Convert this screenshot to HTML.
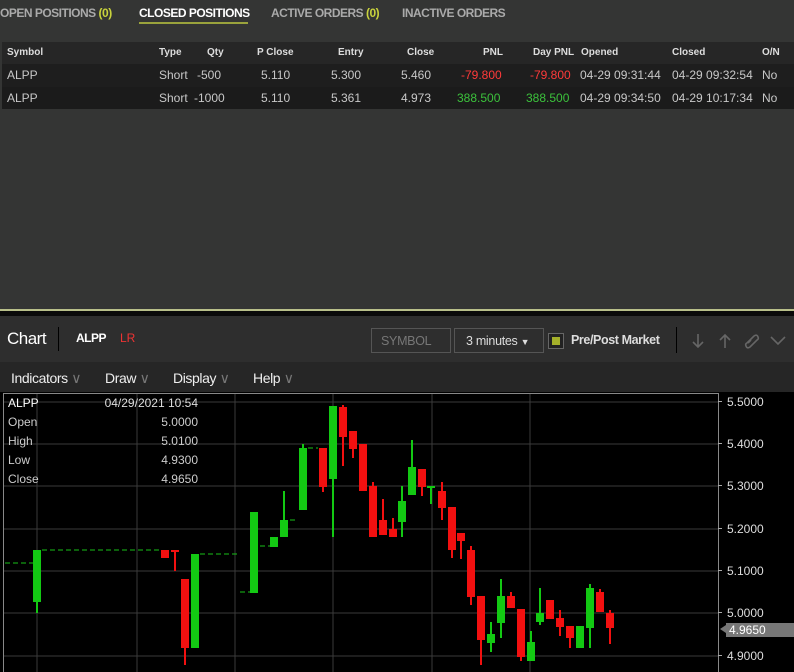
<!DOCTYPE html>
<html><head><meta charset="utf-8"><style>
*{margin:0;padding:0;box-sizing:border-box}
body{width:794px;height:672px;overflow:hidden;background:#343534;font-family:"Liberation Sans",Arial,sans-serif;position:relative;font-size:12px;color:#ccc}
.abs{position:absolute;white-space:nowrap}
.tab{top:6px;font-size:12px;font-weight:bold;color:#aaa;letter-spacing:-0.5px}
.y{color:#c8d23c}
.row{position:absolute;left:2px;width:792px;height:22px}
.c{position:absolute;top:5px;white-space:nowrap}
.h .c{font-size:10px;font-weight:bold;color:#ddd;top:5px}
.d .c{font-size:12px;color:#c8c8c8;top:4px}
.red{color:#ff3a3a!important}.grn{color:#3cc23c!important}
</style></head><body>
<div class="abs tab" style="left:0">OPEN POSITIONS <span class="y">(0)</span></div>
<div class="abs tab" style="left:139px;color:#fff">CLOSED POSITIONS</div>
<div class="abs" style="left:139px;top:22px;width:109px;height:2px;background:#9aa33c"></div>
<div class="abs tab" style="left:271px">ACTIVE ORDERS <span class="y">(0)</span></div>
<div class="abs tab" style="left:402px">INACTIVE ORDERS</div>

<div class="row h" style="top:42px;background:#262626">
<div class="c" style="left:5px">Symbol</div><div class="c" style="left:157px">Type</div><div class="c" style="left:205px">Qty</div>
<div class="c" style="left:255px">P Close</div><div class="c" style="left:336px">Entry</div><div class="c" style="left:405px">Close</div>
<div class="c" style="left:481px">PNL</div><div class="c" style="left:531px">Day PNL</div><div class="c" style="left:579px">Opened</div>
<div class="c" style="left:670px">Closed</div><div class="c" style="left:760px">O/N</div></div>
<div class="row d" style="top:64px;background:#1e1e1e;height:23px">
<div class="c" style="left:5px">ALPP</div><div class="c" style="left:157px">Short</div><div class="c" style="left:195px">-500</div>
<div class="c" style="left:259px">5.110</div><div class="c" style="left:329px">5.300</div><div class="c" style="left:399px">5.460</div>
<div class="c red" style="left:459px">-79.800</div><div class="c red" style="left:528px">-79.800</div><div class="c" style="left:578px">04-29 09:31:44</div>
<div class="c" style="left:670px">04-29 09:32:54</div><div class="c" style="left:760px">No</div></div>
<div class="row d" style="top:87px;background:#1b1b1b">
<div class="c" style="left:5px">ALPP</div><div class="c" style="left:157px">Short</div><div class="c" style="left:192px">-1000</div>
<div class="c" style="left:259px">5.110</div><div class="c" style="left:329px">5.361</div><div class="c" style="left:399px">4.973</div>
<div class="c grn" style="left:455px">388.500</div><div class="c grn" style="left:524px">388.500</div><div class="c" style="left:578px">04-29 09:34:50</div>
<div class="c" style="left:670px">04-29 10:17:34</div><div class="c" style="left:760px">No</div></div>

<div class="abs" style="left:0;top:309px;width:794px;height:2px;background:#b8bf8a"></div>
<div class="abs" style="left:0;top:311px;width:794px;height:5px;background:#0a0a0a"></div>
<div class="abs" style="left:0;top:316px;width:794px;height:46px;background:#2e2e2e"></div>
<div class="abs" style="left:7px;top:329px;font-size:17px;color:#fff;letter-spacing:-0.5px">Chart</div>
<div class="abs" style="left:58px;top:327px;width:1px;height:24px;background:#000"></div>
<div class="abs" style="left:76px;top:331px;font-size:12px;font-weight:bold;color:#fff;letter-spacing:-0.5px">ALPP</div>
<div class="abs" style="left:120px;top:331px;font-size:12px;color:#e33">LR</div>
<div class="abs" style="left:371px;top:328px;width:80px;height:25px;border:1px solid #555;color:#777;font-size:12.5px;padding:5px 0 0 9px;letter-spacing:-0.3px">SYMBOL</div>
<div class="abs" style="left:454px;top:328px;width:90px;height:25px;border:1px solid #555;color:#ddd;font-size:12.5px;padding:5px 0 0 11px;letter-spacing:-0.3px">3 minutes <span style="font-size:9px">▼</span></div>
<div class="abs" style="left:548px;top:333px;width:16px;height:16px;border:1px solid #666;background:#222"><div style="margin:3px;width:8px;height:8px;background:#a4b02a"></div></div>
<div class="abs" style="left:571px;top:333px;font-size:12.5px;font-weight:bold;color:#ddd;letter-spacing:-0.4px">Pre/Post Market</div>
<div class="abs" style="left:676px;top:327px;width:1px;height:26px;background:#000"></div>
<svg class="abs" style="left:688px;top:332px" width="100" height="18">
<g stroke="#666" stroke-width="1.6" fill="none">
<path d="M10 2 V15 M5 10 L10 15 L15 10"/>
<path d="M37 16 V3 M32 8 L37 3 L42 8"/>
<path d="M59 11 L66 4 Q69 2 70 5 Q71 7 69 8 L62 15 Q59 17 58 14 Q57 12 59 11 M63 8 L60 11"/>
<path d="M83 5 L90 12 L97 5"/>
</g></svg>

<div class="abs" style="left:0;top:362px;width:794px;height:30px;background:#262626"></div>
<div class="abs" style="left:11px;top:370px;font-size:14px;color:#eee;letter-spacing:-0.4px">Indicators <span style="color:#777">∨</span></div>
<div class="abs" style="left:105px;top:370px;font-size:14px;color:#eee;letter-spacing:-0.4px">Draw <span style="color:#777">∨</span></div>
<div class="abs" style="left:173px;top:370px;font-size:14px;color:#eee;letter-spacing:-0.4px">Display <span style="color:#777">∨</span></div>
<div class="abs" style="left:253px;top:370px;font-size:14px;color:#eee;letter-spacing:-0.4px">Help <span style="color:#777">∨</span></div>

<svg class="abs" style="left:0;top:392px" width="794" height="280">
<rect x="0" y="0" width="794" height="280" fill="#000"/>
<rect x="3.5" y="1.5" width="715" height="290" fill="none" stroke="#888"/>
<g stroke="#3a3a3a" stroke-width="1">
<line x1="4" y1="10" x2="718" y2="10"/><line x1="4" y1="52" x2="718" y2="52"/><line x1="4" y1="94" x2="718" y2="94"/><line x1="4" y1="137" x2="718" y2="137"/><line x1="4" y1="179" x2="718" y2="179"/><line x1="4" y1="221" x2="718" y2="221"/><line x1="4" y1="264" x2="718" y2="264"/>
<line x1="37" y1="2" x2="37" y2="280"/><line x1="137" y1="2" x2="137" y2="280"/><line x1="235" y1="2" x2="235" y2="280"/><line x1="333" y1="2" x2="333" y2="280"/><line x1="432" y1="2" x2="432" y2="280"/><line x1="530" y1="2" x2="530" y2="280"/>
</g>
<g fill="#aaa">
<rect x="718" y="9" width="4" height="1"/><rect x="718" y="51" width="4" height="1"/><rect x="718" y="93" width="4" height="1"/><rect x="718" y="136" width="4" height="1"/><rect x="718" y="178" width="4" height="1"/><rect x="718" y="220" width="4" height="1"/><rect x="718" y="263" width="4" height="1"/>
</g>
<g font-family="Liberation Sans,Arial" font-size="12" fill="#ddd">
<text x="727" y="14">5.5000</text><text x="727" y="56">5.4000</text><text x="727" y="98">5.3000</text><text x="727" y="141">5.2000</text><text x="727" y="183">5.1000</text><text x="727" y="225">5.0000</text><text x="727" y="268">4.9000</text>
</g>
<polygon points="720,237 726,233 726,241" fill="#777"/>
<rect x="726" y="231" width="68" height="14" fill="#777"/>
<text x="729" y="242" font-family="Liberation Sans,Arial" font-size="12" fill="#fff">4.9650</text>
<g font-family="Liberation Sans,Arial" font-size="12" fill="#ccc">
<text x="8" y="15" fill="#fff">ALPP</text><text x="198" y="15" text-anchor="end" fill="#ddd">04/29/2021 10:54</text>
<text x="8" y="34">Open</text><text x="198" y="34" text-anchor="end">5.0000</text>
<text x="8" y="53">High</text><text x="198" y="53" text-anchor="end">5.0100</text>
<text x="8" y="72">Low</text><text x="198" y="72" text-anchor="end">4.9300</text>
<text x="8" y="91">Close</text><text x="198" y="91" text-anchor="end">4.9650</text>
</g>
<g stroke="#19c019" stroke-dasharray="5,3" stroke-width="1">
<line x1="5" y1="171" x2="33" y2="171"/><line x1="42" y1="158" x2="160" y2="158"/><line x1="200" y1="162" x2="238" y2="162"/>
<line x1="240" y1="200" x2="250" y2="200"/><line x1="260" y1="154" x2="270" y2="154"/><line x1="290" y1="128" x2="298" y2="128"/><line x1="308" y1="56" x2="318" y2="56"/>
</g>
<g id="c"></g>
</svg>
<script>
var C=[
['g',37,158,210,158,221],['r',165,158,166,158,166],['r',175,158,160,158,179],['r',185,187,256,187,273],['g',195,162,256,162,256],
['g',254,120,201,120,201],['g',274,145,155,145,155],['g',284,128,145,99,145],['g',303,56,118,52,118],['r',323,56,95,56,100],
['g',333,14,87,14,145],['r',343,15,45,13,74],['r',353,39,57,39,66],['r',363,52,99,52,99],['r',373,94,145,90,145],['r',383,128,143,107,143],
['r',393,137,145,126,145],['g',402,109,130,94,145],['g',412,75,103,48,103],['r',422,77,95,77,104],['g',431,94,95,94,112],['r',442,99,116,90,128],
['r',452,115,158,115,166],['r',461,141,149,141,167],['r',471,158,205,154,213],['r',481,204,248,204,273],['g',491,242,251,230,260],
['g',501,204,231,187,246],['r',511,204,216,200,216],['r',521,217,265,217,269],['g',531,250,269,239,269],['g',540,221,230,196,233],
['r',550,208,227,208,227],['r',560,226,235,218,244],['r',570,234,246,234,256],['g',580,234,256,234,256],['g',590,196,236,192,256],
['r',600,200,220,197,220],['r',610,221,236,218,252]];
var s='';C.forEach(function(k){var col=k[0]=='g'?'#13c913':'#f21010';var x=k[1],t=Math.min(k[2],k[3]),b=Math.max(k[2],k[3]);
s+='<line x1="'+x+'" y1="'+k[4]+'" x2="'+x+'" y2="'+k[5]+'" stroke="'+col+'" stroke-width="2"/>';
s+='<rect x="'+(x-4)+'" y="'+t+'" width="8" height="'+Math.max(b-t,2)+'" fill="'+col+'"/>';});
document.getElementById('c').innerHTML=s;
</script>
</body></html>
